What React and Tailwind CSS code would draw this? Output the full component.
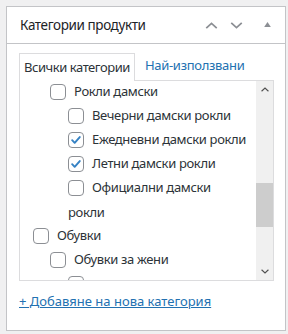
const rows = [
  { label: "Рокли дамски", level: 1 },
  { label: "Вечерни дамски рокли", level: 2 },
  { label: "Ежедневни дамски рокли", level: 2, checked: true },
  { label: "Летни дамски рокли", level: 2, checked: true },
  { label: "Официални дамски", rest: "рокли", level: 2 },
  { label: "Обувки", level: 0 },
  { label: "Обувки за жени", level: 1 },
  { label: "", level: 2 },
];

const indents = ["pl-[13px]", "pl-[30px]", "pl-[48px]"];

const Checkbox = ({ checked }) => (
  <span className="inline-flex w-4 h-4 shrink-0 items-center justify-center rounded-[4px] border border-[#8c8f94] bg-white">
    {checked && (
      <svg viewBox="0 0 16 16" className="w-4 h-4">
        <path d="M3.6 8.2l2.9 3 5.8-6.6" fill="none" stroke="#3582c4" strokeWidth="2.2" strokeLinecap="round" strokeLinejoin="round" />
      </svg>
    )}
  </span>
);

const Chevron = ({ up, className }) => (
  <svg viewBox="0 0 14 8" className={className}>
    <path d={up ? "M1 7l6-5.5 6 5.5" : "M1 1l6 5.5 6-5.5"} fill="none" stroke="currentColor" strokeWidth="2" />
  </svg>
);

export default function App() {
  return (
    <div className="w-[288px] h-[334px] bg-[#f0f0f1] p-[6px] pr-[2px] pb-[3px] text-[13px] text-[#2c3338]" style={{ fontFamily: '"Noto Sans", sans-serif' }}>
      <div className="h-full bg-white border border-[#c3c4c7] flex flex-col">
        <div className="h-[37px] border-b border-[#c3c4c7] flex items-center pl-[13px] pr-[14px]">
          <h2 className="flex-1 text-[13.5px] tracking-[-0.4px] text-[#1d2327]">Категории продукти</h2>
          <div className="flex items-center text-[#8c8f94]">
            <Chevron up className="w-[13px] h-[7px] mr-[12px]" />
            <Chevron className="w-[13px] h-[7px] mr-[21px]" />
            <svg viewBox="0 0 8 6" className="w-[7px] h-[5px] mb-[2px]"><path d="M0 6L4 0 8 6z" fill="currentColor" /></svg>
          </div>
        </div>

        <div className="pl-[12px] pr-[11px] pt-[8px]">
          <div className="flex items-end">
            <div className="h-[28px] px-[4px] flex items-center border border-b-0 border-[#dcdcde] bg-white text-[#2c3338] tracking-[-0.45px] relative top-[1px] z-10">
              Всички категории
            </div>
            <div className="h-[28px] px-[10px] flex items-center text-[#2271b1] tracking-[-0.3px]">Най-използвани</div>
          </div>

          <div className="h-[201px] border border-[#dcdcde] flex overflow-hidden">
            <div className="flex-1 overflow-hidden">
              <div className="-mt-[1px] tracking-[-0.35px]">
                {rows.map((r, i) => (
                  <div key={i} className={`${indents[r.level]} text-[#2c3338]`}>
                    <div className="h-[24px] flex items-center gap-[8px] whitespace-nowrap">
                      <Checkbox checked={r.checked} />
                      <span>{r.label}</span>
                    </div>
                    {r.rest && <div className="h-[24px] leading-[24px]">{r.rest}</div>}
                  </div>
                ))}
              </div>
            </div>
            <div className="w-[17px] bg-[#f0f0f0] flex flex-col items-center text-[#505050]">
              <Chevron up className="w-[8px] h-[5px] mt-[6px]" />
              <div className="flex-1 w-full pt-[91px] pb-[42px]">
                <div className="h-[44px] w-full bg-[#cdcdcd]" />
              </div>
              <Chevron className="w-[8px] h-[5px] mb-[6px]" />
            </div>
          </div>

          <a href="#" className="inline-block mt-[11px] text-[#2271b1] underline">
            + Добавяне на нова категория
          </a>
        </div>
      </div>
    </div>
  );
}
